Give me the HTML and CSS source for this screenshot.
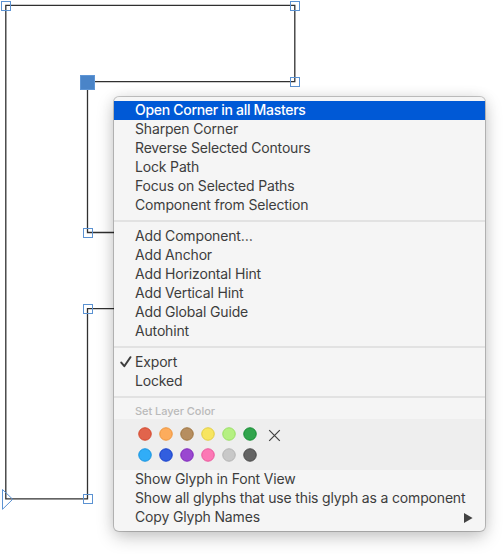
FILE: index.html
```
<!DOCTYPE html>
<html lang="en">
<head>
<meta charset="utf-8">
<title>Glyph editor</title>
<link rel="stylesheet" href="styles.css">
</head>
<body>
<svg class="canvas" width="504" height="554" viewBox="0 0 504 554">
  <path class="outline" d="M5.8 5.4H294.8V81.7H87.5V232.5H200V308.7H87.5V498.8H5.8Z"/>
  <g class="node">
    <rect x="1.5" y="1.5" width="9" height="9"/>
    <rect x="290.5" y="1.5" width="9" height="9"/>
    <rect x="290.5" y="77.5" width="9" height="9"/>
    <rect x="83.5" y="228.5" width="9" height="9"/>
    <rect x="83.5" y="304.5" width="9" height="9"/>
    <rect x="83.5" y="494.5" width="9" height="9"/>
    <path d="M2.5 489.5L12.7 499.3L2.5 509.3Z"/>
  </g>
  <rect class="node-selected" x="80.5" y="75.5" width="14" height="14"/>
</svg>
<div class="menu">
  <div class="item active"><span>Open Corner in all Masters</span></div>
  <div class="item"><span>Sharpen Corner</span></div>
  <div class="item"><span>Reverse Selected Contours</span></div>
  <div class="item"><span>Lock Path</span></div>
  <div class="item"><span>Focus on Selected Paths</span></div>
  <div class="item"><span>Component from Selection</span></div>
  <div class="separator"></div>
  <div class="item"><span>Add Component…</span></div>
  <div class="item"><span>Add Anchor</span></div>
  <div class="item"><span>Add Horizontal Hint</span></div>
  <div class="item"><span>Add Vertical Hint</span></div>
  <div class="item"><span>Add Global Guide</span></div>
  <div class="item"><span>Autohint</span></div>
  <div class="separator"></div>
  <div class="item"><svg class="check" width="12" height="12" viewBox="0 0 12 12"><path d="M1.3 6.6L4.3 10.2L10.4 1.2"/></svg><span>Export</span></div>
  <div class="item"><span>Locked</span></div>
  <div class="separator"></div>
  <div class="heading">Set Layer Color</div>
  <div class="colors">
    <i class="dot red"></i><i class="dot orange"></i><i class="dot brown"></i><i class="dot yellow"></i><i class="dot lime"></i><i class="dot green"></i>
    <svg class="clear" width="13" height="13" viewBox="0 0 13 13"><path d="M1.2 1.2L11.8 11.8M11.8 1.2L1.2 11.8"/></svg>
    <i class="dot sky"></i><i class="dot blue"></i><i class="dot purple"></i><i class="dot pink"></i><i class="dot silver"></i><i class="dot gray"></i>
  </div>
  <div class="item"><span>Show Glyph in Font View</span></div>
  <div class="item"><span>Show all glyphs that use this glyph as a component</span></div>
  <div class="item"><span>Copy Glyph Names</span><svg class="arrow" width="9" height="10" viewBox="0 0 9 10"><path d="M0 0L8.6 5L0 10Z"/></svg></div>
</div>
</body>
</html>
```
FILE: styles.css
```
body {
  margin: 0;
  width: 504px;
  height: 554px;
  position: relative;
  overflow: hidden;
  background: #fff;
  font-family: Inter, "Liberation Sans", sans-serif;
}
.canvas { display: block; }
.outline { fill: none; stroke: #303030; stroke-width: 1.3; }
.node { fill: none; stroke: #5b92d2; stroke-width: 1; }
.node-selected { fill: #4a84c8; stroke: #5f96d6; stroke-width: 1; }
.menu {
  position: absolute;
  left: 114px;
  top: 97px;
  width: 371px;
  height: 434px;
  padding: 4px 0;
  box-sizing: border-box;
  border-radius: 5px;
  background: #f5f5f5;
  box-shadow: 0 0 0 1px rgba(0, 0, 0, 0.2), 0 6px 18px rgba(0, 0, 0, 0.22), 0 0 14px rgba(0, 0, 0, 0.08);
}
.item {
  position: relative;
  height: 19px;
  padding-left: 21px;
  font-size: 14px;
  line-height: 17px;
  letter-spacing: -0.165px;
  white-space: nowrap;
  color: #3d3d3d;
}
.active { background: #0059d6; color: #fff; font-weight: 500; letter-spacing: -0.3px; }
.separator { height: 2px; margin: 5px 0; background: #e2e2e2; }
.heading {
  height: 16px;
  padding-left: 21px;
  font-size: 11px;
  line-height: 16px;
  font-weight: 500;
  letter-spacing: -0.05px;
  color: #bababa;
}
.check { position: absolute; left: 6px; top: 3px; }
.check path { fill: none; stroke: #3d3d3d; stroke-width: 2; stroke-linecap: round; stroke-linejoin: round; }
.arrow { position: absolute; left: 350px; top: 5px; fill: #424242; }
.colors {
  height: 51px;
  padding: 8px 0 0 24px;
  box-sizing: border-box;
  display: grid;
  grid-template-columns: repeat(6, 14px) 16px;
  grid-auto-rows: 14px;
  gap: 7px;
  background: #eee;
}
.dot { box-sizing: border-box; width: 14px; height: 14px; border: 1px solid; border-radius: 50%; transform: scale(0.96); }
.clear { margin: 2px 0 0 4px; }
.clear path { fill: none; stroke: #404040; stroke-width: 1.2; }
.red { background: #e1644c; border-color: #d34429; }
.orange { background: #fdac5c; border-color: #ee9338; }
.brown { background: #b68e60; border-color: #9e733d; }
.yellow { background: #f7e560; border-color: #e1cc3e; }
.lime { background: #b5f082; border-color: #98df61; }
.green { background: #31a44c; border-color: #128b30; }
.sky { background: #31adf7; border-color: #1191df; }
.blue { background: #325edf; border-color: #123cc9; }
.purple { background: #9a48d0; border-color: #7c24b9; }
.pink { background: #fc78b5; border-color: #e9559a; }
.silver { background: #c8c8c8; border-color: #b2b2b2; }
.gray { background: #646464; border-color: #464646; }
```
